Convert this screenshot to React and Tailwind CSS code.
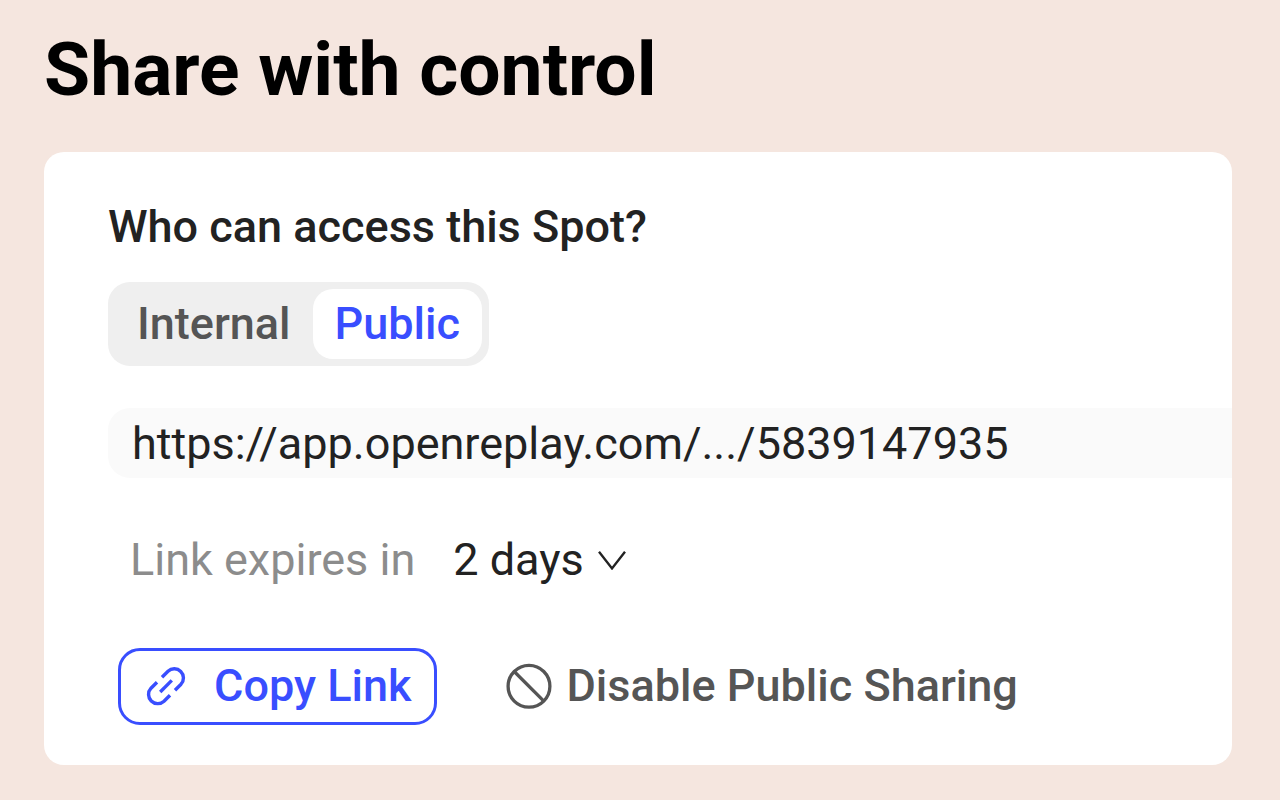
import { useState } from "react";

function LinkIcon() {
  return (
    <svg viewBox="0 0 40 40" className="size-10 shrink-0" fill="none" stroke="currentColor" strokeWidth="3.4" aria-hidden="true">
      <path d="M16 11.2 L22 5.2 A9.2 9.2 0 0 1 35 18.2 L29 24.2" />
      <path d="M24 29.2 L18 35.2 A9.2 9.2 0 0 1 5 22.2 L11 16.2" />
      <path d="M14.2 26 L25.8 14.4" />
    </svg>
  );
}

function BanIcon() {
  return (
    <svg viewBox="0 0 46 46" className="size-[46px] shrink-0" fill="none" stroke="currentColor" strokeWidth="3.3" aria-hidden="true">
      <circle cx="23" cy="23.3" r="20.9" />
      <path d="M8.2 8.5 L37.8 38.1" />
    </svg>
  );
}

function ChevronIcon() {
  return (
    <svg viewBox="0 0 28 20" className="pointer-events-none absolute right-0 top-[18px] h-5 w-7" fill="none" stroke="currentColor" strokeWidth="2.4" aria-hidden="true">
      <path d="M1 1.8 L14 18.4 L27 1.8" />
    </svg>
  );
}

function AccessToggle({ value, onChange }) {
  return (
    <div role="group" aria-labelledby="access-title" className="mt-[27px] flex h-[84px] w-fit items-center rounded-[22px] bg-[#efefef] p-[7px] font-medium">
      {["Internal", "Public"].map((name) => (
        <button
          key={name}
          type="button"
          aria-pressed={value === name}
          onClick={() => onChange(name)}
          className={
            value === name
              ? "h-[70px] rounded-[20px] bg-white px-[22px] text-[#394eff]"
              : "h-[70px] rounded-[20px] px-[22px] text-[#555555]"
          }
        >
          {name}
        </button>
      ))}
    </div>
  );
}

export default function App() {
  const [access, setAccess] = useState("Public");
  const [expiry, setExpiry] = useState("2 days");

  return (
    <main className="min-h-screen bg-[#f5e6df] pt-[27px] pr-12 pb-[35px] pl-11 font-['Roboto',sans-serif] text-[#222222]">
      <h1 className="text-[75px] leading-[84px] font-bold text-black">Share with control</h1>

      <section className="mt-[41px] rounded-[20px] bg-white pt-[47px] pb-10 pl-16 text-[45px] leading-[56px]">
        <h2 id="access-title" className="font-medium">Who can access this Spot?</h2>
        <AccessToggle value={access} onChange={setAccess} />

        <input
          type="text"
          readOnly
          aria-label="Spot link"
          value="https://app.openreplay.com/.../5839147935"
          className="mt-[42px] block h-[70px] w-full rounded-l-[22px] bg-[#fafafa] pl-6 outline-none"
        />

        <div className="mt-[54px] flex items-center gap-[38px] pl-[22px]">
          <label htmlFor="expiry" className="text-[#8c8c8c]">Link expires in</label>
          <div className="relative">
            <select
              id="expiry"
              value={expiry}
              onChange={(e) => setExpiry(e.target.value)}
              className="block h-14 appearance-none bg-transparent pr-[42px] outline-none"
            >
              <option>1 day</option>
              <option>2 days</option>
            </select>
            <ChevronIcon />
          </div>
        </div>

        <div className="mt-[60px] flex items-center gap-[69px] pl-[10px] font-medium">
          <button type="button" className="flex h-[77px] items-center gap-7 rounded-[22px] border-3 border-[#394eff] pr-[23px] pb-0.5 pl-[25px] text-[#394eff]">
            <LinkIcon />
            Copy Link
          </button>
          <button type="button" className="flex items-center gap-[14px] pb-0.5 text-[#555555]">
            <BanIcon />
            Disable Public Sharing
          </button>
        </div>
      </section>
    </main>
  );
}
